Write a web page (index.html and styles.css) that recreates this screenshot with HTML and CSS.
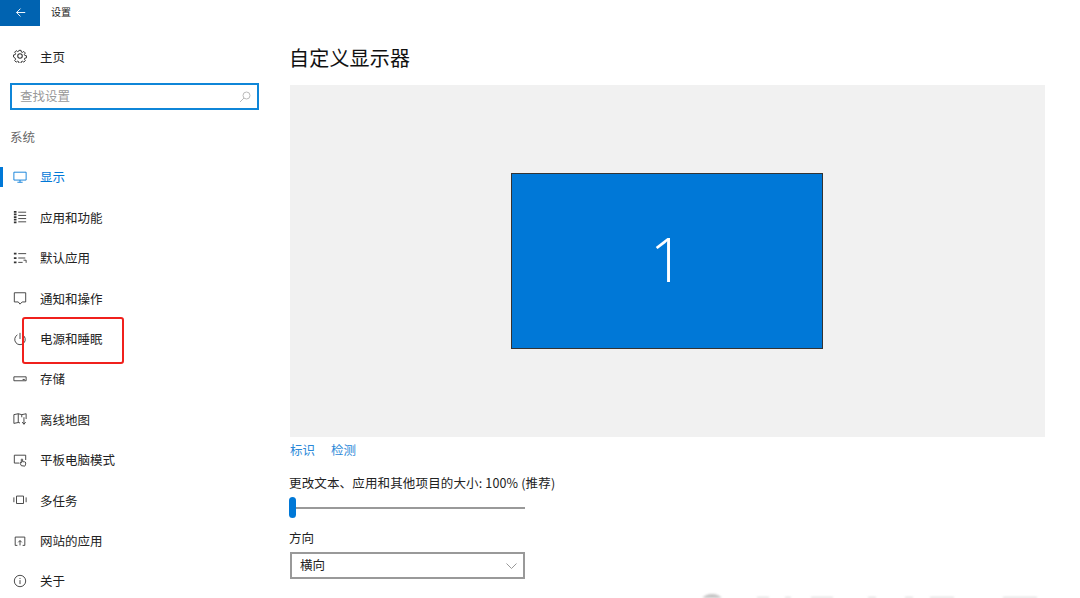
FILE: index.html
```html
<!DOCTYPE html>
<html lang="zh-CN">
<head>
    <meta charset="UTF-8">
    <meta name="viewport" content="width=device-width, initial-scale=1.0">
    <title>设置</title>
    <link rel="stylesheet" href="styles.css">
</head>
<body>
    <header class="titlebar">
        <div class="back-btn">
            <svg viewBox="0 0 14 14"><path d="M13 7H2M7 2L2 7l5 5"/></svg>
        </div>
        <span class="title">设置</span>
    </header>

    <div class="app">
        <aside class="sidebar">
            <div class="home-row">
                <svg class="icon gear" viewBox="0 0 16 16"><circle cx="8" cy="8" r="2.600"/><path d="M6.700 1h2.600l.4 2.100 1.200.5 1.800-1.200 1.900 1.900-1.200 1.800.5 1.200 2.100.4v2.600l-2.100.4-.5 1.200 1.200 1.800-1.900 1.900-1.800-1.200-1.200.5-.4 2.100H6.700l-.4-2.100-1.200-.5-1.800 1.200-1.900-1.900 1.200-1.800-.5-1.200L0 9.300V6.700l2.100-.4.5-1.200-1.200-1.800 1.900-1.900 1.800 1.200 1.200-.5z" transform="translate(.6 .6) scale(.925)"/></svg>
                <span>主页</span>
            </div>
            <div class="search-box">
                <span>查找设置</span>
                <svg width="12" height="12" viewBox="0 0 12 12"><circle cx="7.500" cy="4.500" r="3.500"/><path d="M5 7L1 11"/></svg>
            </div>
            <div class="group-label">系统</div>
            <nav class="nav">
                <div class="nav-item active">
                    <svg class="icon" viewBox="0 0 16 16"><path d="M1 2.500h14v9H1zM8 11.500v2.500M5 14h6"/></svg>
                    <span>显示</span>
                </div>
                <div class="nav-item">
                    <svg class="icon" viewBox="0 0 16 16"><path d="M6 2.500h9M6 6.200h9M6 9.800h9M6 13.500h9"/><path class="thick" d="M1 2h3M1 5h3M1 8h3M1 11h3M1 14h3"/></svg>
                    <span>应用和功能</span>
                </div>
                <div class="nav-item">
                    <svg class="icon" viewBox="0 0 16 16"><path d="M6 3h9M6 8h8M6 13h5M12 10.500h3v3"/><path class="thick" d="M1 3h3M1 8h3M1 13h3"/></svg>
                    <span>默认应用</span>
                </div>
                <div class="nav-item">
                    <svg class="icon" viewBox="0 0 16 16"><path d="M1.500 2h13v10.500h-4L8 15l-2-2.500H1.500z"/></svg>
                    <span>通知和操作</span>
                </div>
                <div class="nav-item">
                    <svg class="icon" viewBox="0 0 16 16"><path d="M5 3.300a6 6 0 1 0 6 0M8 1v7"/></svg>
                    <span>电源和睡眠</span>
                </div>
                <div class="nav-item">
                    <svg class="icon" viewBox="0 0 16 16"><path d="M1 5.500h14v4.500H1zM11 8.500h2.500"/></svg>
                    <span>存储</span>
                </div>
                <div class="nav-item">
                    <svg class="icon" viewBox="0 0 16 16"><path d="M1 3l5-1 4 1 5-1v6M1 3v10l5-1 2 .5M6 2v10M10 3v3M12.500 6v8M10.500 11.500l2 2.500 2-2.500"/></svg>
                    <span>离线地图</span>
                </div>
                <div class="nav-item">
                    <svg class="icon" viewBox="0 0 16 16"><path d="M7 11.500H1.500V2.500h13V8M9.500 14.500L8 11.500c0-1 1-.8 1.500 0V7.500c0-1 1.500-1 1.500 0V10h2c1 0 1.500.5 1.500 1.500 0 1.500-.5 3-1 3.500z"/></svg>
                    <span>平板电脑模式</span>
                </div>
                <div class="nav-item">
                    <svg class="icon" viewBox="0 0 16 16"><path d="M4 3.500h8v8.500H4zM1 5v5.500M15 5v5.500"/></svg>
                    <span>多任务</span>
                </div>
                <div class="nav-item">
                    <svg class="icon" viewBox="0 0 16 16"><path d="M5 13H2.500V3.500h11V13H11M8 13V7.500M6 9.500l2-2 2 2"/></svg>
                    <span>网站的应用</span>
                </div>
                <div class="nav-item">
                    <svg class="icon" viewBox="0 0 16 16"><circle cx="8" cy="8" r="6.500"/><path d="M8 7v4.500M8 4.500v1.200"/></svg>
                    <span>关于</span>
                </div>
            </nav>
        </aside>

        <main class="main">
            <h1>自定义显示器</h1>
            <div class="display-panel">
                <div class="monitor">1</div>
            </div>
            <div class="links">
                <a>标识</a>
                <a>检测</a>
            </div>
            <div class="field-label scale-label">更改文本、应用和其他项目的大小: 100% (推荐)</div>
            <div class="slider"><div class="slider-thumb"></div></div>
            <div class="field-label orient-label">方向</div>
            <div class="select">
                <span>横向</span>
                <svg width="11" height="6" viewBox="0 0 11 6"><path d="M.5.500l5 5 5-5"/></svg>
            </div>
        </main>
    </div>

    <!-- annotation and watermark lie over the screenshot -->
    <div class="red-box"></div>
    <div class="watermark">
        <div class="wm-avatar"></div>
        <i class="w1"></i><i class="w2"></i><i class="w3"></i><i class="w4"></i><i class="w5"></i><i class="w6"></i><i class="w7"></i>
    </div>
</body>
</html>
```

FILE: styles.css
```css
* {
    box-sizing: border-box;
}

html, body {
    height: 598px;
    overflow: hidden;
}

body {
    margin: 0;
    background-color: #fff;
    color: #222;
    font-family: "Noto Sans CJK SC", "Liberation Sans", sans-serif;
    font-size: 12.5px;
    position: relative;
}

svg {
    fill: none;
    stroke: #333;
    stroke-width: 1;
    flex: none;
}

/* Barra de titulo */
.titlebar {
    height: 26px;
    display: flex;
    align-items: center;
}

.back-btn {
    width: 40px;
    height: 26px;
    padding-bottom: 2px;
    background-color: #0063b1;
    display: flex;
    justify-content: center;
    align-items: center;
}

.back-btn svg {
    stroke: #fff;
    stroke-width: 1.2;
    width: 11px;
    height: 11px;
}

.title {
    margin: -3px 0 0 11px;
    font-size: 10px;
}

.app {
    display: flex;
}

/* Sidebar */
.sidebar {
    width: 290px;
    flex: none;
}

.icon {
    width: 14px;
    height: 14px;
    margin-right: 13px;
}

.gear {
    stroke-width: 1.2;
}

.thick {
    stroke-width: 2;
}

.home-row {
    height: 40px;
    margin-top: 10px;
    padding-left: 13px;
    display: flex;
    align-items: center;
}

.search-box {
    width: 249px;
    height: 27px;
    margin: 7px 0 0 10px;
    padding: 0 6px 0 8px;
    border: 2px solid #0f86d8;
    display: flex;
    align-items: center;
    justify-content: space-between;
    color: #999;
}

.search-box span {
    margin-top: -2px;
}

.search-box svg {
    stroke: #bbb;
}

.group-label {
    height: 20px;
    line-height: 20px;
    margin: 17px 0 0 10px;
    color: #666;
}

.nav {
    margin-top: 9.8px;
}

.nav-item {
    height: 40.4px;
    padding-left: 13px;
    display: flex;
    align-items: center;
    position: relative;
}

.nav-item.active {
    color: #0078d7;
}

.nav-item.active svg {
    stroke: #0078d7;
}

.nav-item.active::before {
    content: "";
    position: absolute;
    left: 0;
    top: 10px;
    width: 3px;
    height: 20px;
    background-color: #0078d7;
}

/* Contenido */
.main {
    width: 755px;
    flex: none;
}

h1 {
    margin: 17px 0 12px -1px;
    height: 30px;
    line-height: 30px;
    font-size: 20px;
    font-weight: 400;
    letter-spacing: 0.2px;
    color: #111;
}

.display-panel {
    height: 352px;
    background-color: #f1f1f1;
    display: flex;
    justify-content: center;
    align-items: center;
}

.monitor {
    width: 312px;
    height: 176px;
    margin-right: 1px;
    padding-bottom: 5px;
    background-color: #0078d7;
    border: 1.5px solid #333;
    color: #fff;
    display: flex;
    justify-content: center;
    align-items: center;
    font-family: "Open Sans", sans-serif;
    font-weight: 300;
    font-size: 60px;
}

.links {
    display: flex;
    gap: 16px;
    margin-top: 3px;
    line-height: 20px;
    color: #2b88d8;
}

.field-label {
    height: 20px;
    line-height: 20px;
    margin-left: -1px;
}

.scale-label {
    margin-top: 13px;
    letter-spacing: 0.15px;
}

.slider {
    width: 235px;
    height: 21px;
    margin-top: 4px;
    display: flex;
    align-items: center;
    background: linear-gradient(#999, #999) center / 100% 2px no-repeat;
}

.slider-thumb {
    width: 7px;
    height: 21px;
    margin-left: -1px;
    background-color: #0078d7;
    border-radius: 4px;
}

.orient-label {
    margin-top: 10px;
}

.select {
    width: 235px;
    height: 27px;
    margin-top: 4px;
    padding: 0 6px 0 8px;
    border: 2px solid #999;
    display: flex;
    align-items: center;
    justify-content: space-between;
}

.select span {
    margin-top: -2px;
}

.select svg {
    stroke: #999;
}

/* Anotacion roja */
.red-box {
    position: absolute;
    left: 22px;
    top: 317px;
    width: 102px;
    height: 47px;
    border: 2px solid #f0201c;
    border-radius: 3px;
}

/* Marca de agua cortada abajo */
.watermark {
    position: absolute;
    inset: 0;
    overflow: hidden;
    filter: blur(0.8px);
}

.wm-avatar {
    position: absolute;
    left: 698px;
    top: 594px;
    width: 28px;
    height: 28px;
    border-radius: 50%;
    background-color: #c4c4c4;
}

.watermark i {
    position: absolute;
    top: 597px;
    height: 2px;
    background-color: #cfcfcf;
}

.w1 { left: 757px; width: 12px; }
.w2 { left: 785px; width: 6px; }
.w3 { left: 811px; width: 22px; }
.w4 { left: 868px; width: 8px; }
.w5 { left: 905px; width: 8px; }
.w6 { left: 930px; width: 24px; }
.w7 { left: 1003px; width: 34px; }
```
